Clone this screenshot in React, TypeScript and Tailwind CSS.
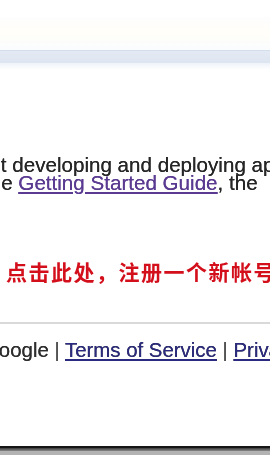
export default function App() {
  return (
    <div className="w-[270px] h-[455px] overflow-hidden bg-white flex flex-col font-['Liberation_Sans',Arial,sans-serif] blur-[0.4px]">
      {/* top header strip */}
      <div className="h-[17px] shrink-0 bg-white" />
      <div className="h-[33px] shrink-0 bg-gradient-to-b from-[#fdfdfe] via-[#fffef8] to-[#fafcfe]" />
      <div className="h-[13px] shrink-0 border-t border-[#d5dfec] bg-gradient-to-b from-[#e4eaf4] to-[#dde5f0]" />
      <div className="h-[7px] shrink-0 bg-gradient-to-b from-[#eef3f9] to-white" />

      {/* intro paragraph */}
      <div className="mt-[86px] text-[20.6px] leading-[18px] text-[#262626] whitespace-nowrap [text-shadow:0_0_0.5px_#262626]">
        <div className="-ml-[45px]">
          about developing and deploying applications on Google App Engine,
        </div>
        <div className="-ml-[16px]">
          the <a className="text-[#5b3b91] underline [text-shadow:0_0_0.5px_#5b3b91]">Getting Started Guide</a>, the{'  '}
          <span className="ml-[6px]">Developer's Guide</span>
        </div>
      </div>

      {/* sign-up call to action */}
      <div className="mt-[67px] h-[24px] leading-[24px] ml-[6px] whitespace-nowrap text-[21px] font-bold tracking-[1.5px] text-[#d40f1c] font-['Noto_Sans_CJK_SC',sans-serif]">
        点击此处，注册一个新帐号
      </div>

      {/* footer */}
      <div className="mt-[39px] h-[2px] shrink-0 bg-[#d9d9d9]" />
      <div className="mt-[16px] -ml-[17px] text-[20.4px] leading-[20px] whitespace-nowrap text-[#2e2e2e] [text-shadow:0_0_0.5px_#2e2e2e]">
        Google <span className="text-[#555]">|</span>{' '}
        <a className="text-[#2a2a80] underline">Terms of Service</a>{' '}
        <span className="text-[#555]">|</span>{' '}
        <a className="text-[#2a2a80] underline">Privacy Policy</a>
      </div>

      {/* window edge */}
      <div className="mt-auto h-[2px] shrink-0 bg-[#161616]" />
      <div className="h-[3px] shrink-0 bg-gradient-to-b from-[#3c3c3c] to-[#8a8a8a]" />
      <div className="h-[4px] shrink-0 bg-[#b3b3b3]" />
    </div>
  );
}
